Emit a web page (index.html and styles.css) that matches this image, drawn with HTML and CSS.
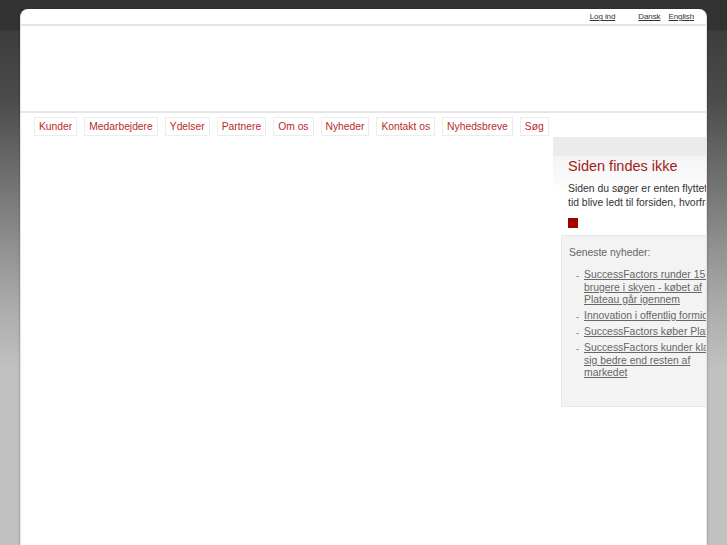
FILE: index.html
```html
<!DOCTYPE html>
<html lang="da">
<head>
<meta charset="utf-8">
<title>Siden findes ikke</title>
<link rel="stylesheet" href="styles.css">
</head>
<body>
<div class="page">
  <div class="topbar">
    <a class="toplink login" href="#">Log ind</a>
    <a class="toplink" href="#">Dansk</a>
    <a class="toplink" href="#">English</a>
  </div>
  <div class="header"></div>
  <nav class="nav">
    <a class="navitem" href="#">Kunder</a>
    <a class="navitem" href="#">Medarbejdere</a>
    <a class="navitem" href="#">Ydelser</a>
    <a class="navitem" href="#">Partnere</a>
    <a class="navitem" href="#">Om os</a>
    <a class="navitem" href="#">Nyheder</a>
    <a class="navitem" href="#">Kontakt os</a>
    <a class="navitem" href="#">Nyhedsbreve</a>
    <a class="navitem" href="#">Søg</a>
  </nav>
  <div class="content">
    <div class="main"></div>
    <div class="side">
      <div class="notfound">
        <h1 class="title">Siden findes ikke</h1>
        <p class="text">Siden du søger er enten flyttet eller slettet. Du vil om kort tid blive ledt til forsiden, hvorfra du kan finde vej.</p>
        <div class="square"></div>
      </div>
      <div class="news">
        <div class="newshead">Seneste nyheder:</div>
        <ul class="newslist">
          <li class="newsitem"><a href="#">SuccessFactors runder 15 mio. brugere i skyen - købet af Plateau går igennem</a></li>
          <li class="newsitem"><a href="#">Innovation i offentlig formidling</a></li>
          <li class="newsitem"><a href="#">SuccessFactors køber Plateau</a></li>
          <li class="newsitem"><a href="#">SuccessFactors kunder klarer sig bedre end resten af markedet</a></li>
        </ul>
      </div>
    </div>
  </div>
</div>
</body>
</html>
```

FILE: styles.css
```css
html, body {
  margin: 0;
  padding: 0;
}
body {
  min-height: 545px;
  font-family: "Liberation Sans", Arial, sans-serif;
  background: #c1c1c1 linear-gradient(#333333 0, #333333 30px, #3d3d3d 31px, #4c4c4c 100px, #5e5e5e 140px, #7a7a7a 200px, #929292 250px, #a9a9a9 300px, #bcbcbc 355px, #c1c1c1 370px) no-repeat;
  overflow: hidden;
}
.page {
  margin: 9px 0 0 20px;
  width: 685px;
  min-height: 536px;
  background: #fff;
  border-left: 1px solid #e4e4e4;
  border-right: 1px solid #e4e4e4;
  border-radius: 8px 8px 0 0;
  box-shadow: 0 0 3px rgba(0, 0, 0, 0.28);
  overflow: hidden;
}
.topbar {
  height: 15px;
  display: flex;
  justify-content: flex-end;
  align-items: center;
  gap: 8px;
  padding-right: 12px;
  border-bottom: 2px solid #e4e4e4;
}
.toplink {
  font-size: 8px;
  color: #333;
  text-decoration: underline;
  letter-spacing: -0.1px;
}
.login {
  margin-right: 15px;
}
.header {
  height: 85px;
  border-bottom: 2px solid #e6e6e6;
}
.nav {
  display: flex;
  gap: 7px;
  padding: 4px 0 0 13px;
}
.navitem {
  display: block;
  height: 17px;
  line-height: 17px;
  padding: 0 4px;
  border: 1px solid #ededed;
  font-size: 10.3px;
  color: #b92a2a;
  text-decoration: none;
}
.content {
  display: flex;
  padding-top: 1px;
}
.main {
  width: 532px;
  flex-shrink: 0;
}
.side {
  width: 340px;
  flex-shrink: 0;
}
.notfound {
  padding: 18px 0 0 15px;
  background: linear-gradient(#ebebeb 0, #ebebeb 18px, #f4f4f4 19px, #fbfbfb 45px, #fff 58px);
}
.title {
  margin: 0;
  font-size: 14.5px;
  font-weight: normal;
  line-height: 22px;
  color: #a31b1b;
}
.text {
  margin: 5px 0 0;
  width: 272px;
  font-size: 10.4px;
  line-height: 14px;
  color: #333;
}
.square {
  margin-top: 8px;
  width: 10px;
  height: 10px;
  background: #a50000;
}
.news {
  margin: 7px 0 0 8px;
  width: 200px;
  height: 160px;
  padding: 10px 0 0 7px;
  background: #f3f3f3;
  border: 1px solid #e6e6e6;
}
.newshead {
  font-size: 10.4px;
  line-height: 13px;
  color: #666;
}
.newslist {
  list-style: none;
  margin: 10px 0 0;
  padding: 0;
}
.newsitem {
  position: relative;
  padding-left: 15px;
  width: 152px;
  font-size: 10.4px;
  line-height: 12.5px;
  margin-bottom: 3.5px;
  color: #666;
}
.newsitem::before {
  content: "-";
  position: absolute;
  left: 7px;
  top: 1px;
  font-size: 9px;
}
.newsitem a {
  color: #666;
  text-decoration: underline;
}
```
